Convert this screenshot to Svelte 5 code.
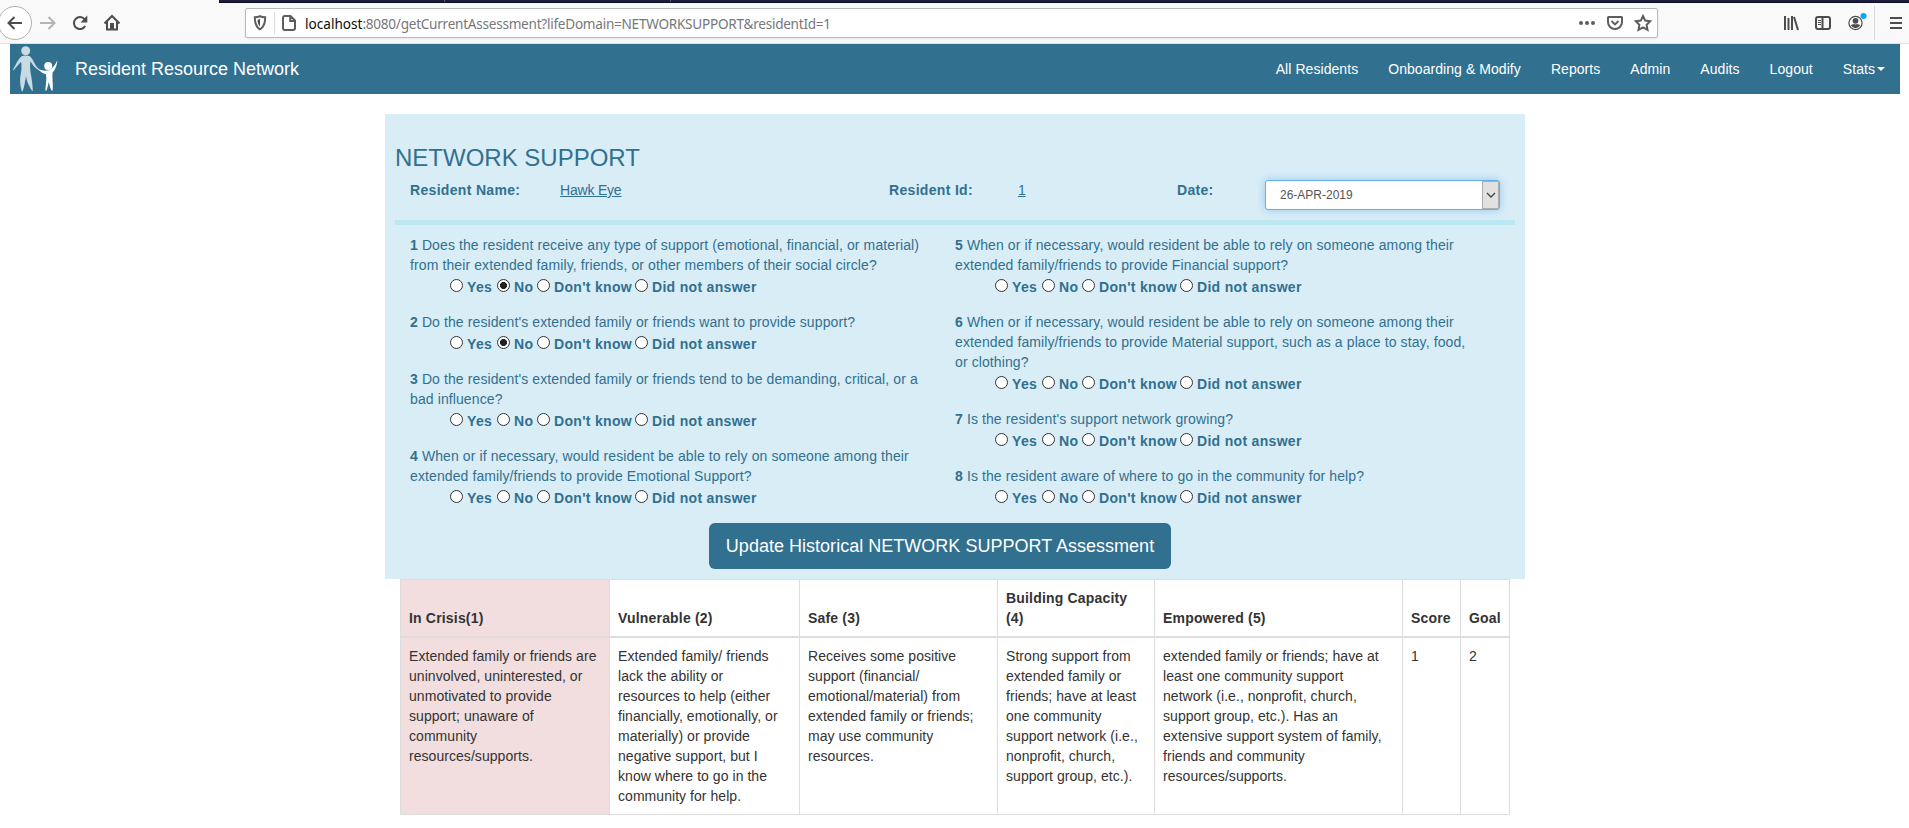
<script>
  const navItems = ['All Residents', 'Onboarding & Modify', 'Reports', 'Admin', 'Audits', 'Logout'];
  const options = ['Yes', 'No', "Don't know", 'Did not answer'];
  const columns = [
    [
      { n: 1, lines: ['Does the resident receive any type of support (emotional, financial, or material)', 'from their extended family, friends, or other members of their social circle?'], answer: 'No' },
      { n: 2, lines: ["Do the resident's extended family or friends want to provide support?"], answer: 'No' },
      { n: 3, lines: ["Do the resident's extended family or friends tend to be demanding, critical, or a", 'bad influence?'] },
      { n: 4, lines: ['When or if necessary, would resident be able to rely on someone among their', 'extended family/friends to provide Emotional Support?'] }
    ],
    [
      { n: 5, lines: ['When or if necessary, would resident be able to rely on someone among their', 'extended family/friends to provide Financial support?'] },
      { n: 6, lines: ['When or if necessary, would resident be able to rely on someone among their', 'extended family/friends to provide Material support, such as a place to stay, food,', 'or clothing?'] },
      { n: 7, lines: ["Is the resident's support network growing?"] },
      { n: 8, lines: ['Is the resident aware of where to go in the community for help?'] }
    ]
  ];
  const levels = [
    { head: ['In Crisis(1)'], width: 209, body: ['Extended family or friends are', 'uninvolved, uninterested, or', 'unmotivated to provide', 'support; unaware of', 'community', 'resources/supports.'], current: true },
    { head: ['Vulnerable (2)'], width: 190, body: ['Extended family/ friends', 'lack the ability or', 'resources to help (either', 'financially, emotionally, or', 'materially) or provide', 'negative support, but I', 'know where to go in the', 'community for help.'] },
    { head: ['Safe (3)'], width: 198, body: ['Receives some positive', 'support (financial/', 'emotional/material) from', 'extended family or friends;', 'may use community', 'resources.'] },
    { head: ['Building Capacity', '(4)'], width: 157, body: ['Strong support from', 'extended family or', 'friends; have at least', 'one community', 'support network (i.e.,', 'nonprofit, church,', 'support group, etc.).'] },
    { head: ['Empowered (5)'], width: 248, body: ['extended family or friends; have at', 'least one community support', 'network (i.e., nonprofit, church,', 'support group, etc.). Has an', 'extensive support system of family,', 'friends and community', 'resources/supports.'] },
    { head: ['Score'], width: 58, body: ['1'] },
    { head: ['Goal'], width: 49, body: ['2'] }
  ];
</script>

<div class="chrome">
  <div class="tabline"><i></i><i></i></div>
  <div class="tools">
    <div class="left-tools">
      <span class="back">
        <svg width="18" height="18" viewBox="0 0 18 18"><path d="M16 9H3M8.500 3 2.500 9l6 6" /></svg>
      </span>
      <svg class="fwd" width="18" height="18" viewBox="0 0 18 18"><path d="M1 9h14M9.500 3l6 6-6 6" /></svg>
      <svg class="reload" width="18" height="18" viewBox="0 0 18 18"><path d="M14.200 12A6 6 0 1 1 13.600 5.200" /><path class="fill" d="M16.300 1.600v6.800H9.500z" /></svg>
      <svg class="home" width="18" height="18" viewBox="0 0 18 18"><path d="M1.500 9.500 9 2l7.500 7.500M4 8v7.500h10V8" /><path class="fill" d="M7 9h4v6H7z" /></svg>
    </div>
    <div class="urlbar">
      <svg class="shield" width="14" height="16" viewBox="0 0 14 16"><path d="M7 1.200c2 .8 3.600 1 5.200 1.100 0 5.500-.8 9.700-5.200 12C2.600 12 1.800 7.800 1.800 2.300 3.400 2.200 5 2 7 1.200z" /><path class="fill" d="M7 4v7.500C5.200 10 4.700 8 4.600 4.700z" /></svg>
      <span class="sep"></span>
      <svg class="page" width="16" height="18" viewBox="0 0 16 18"><path d="M4 2h5.500L14 6.500V14a2 2 0 0 1-2 2H4a2 2 0 0 1-2-2V4a2 2 0 0 1 2-2zM9.200 2.200V7H14" /></svg>
      <span class="url"><b>localhost</b>:8080/getCurrentAssessment?lifeDomain=NETWORKSUPPORT&amp;residentId=1</span>
      <svg class="dots" width="18" height="6" viewBox="0 0 18 6"><circle cx="3" cy="3" r="2" /><circle cx="9" cy="3" r="2" /><circle cx="15" cy="3" r="2" /></svg>
      <svg class="pocket" width="18" height="16" viewBox="0 0 18 16"><path d="M2.500 2h13a.5.5 0 0 1 .5.5V7A7 7 0 0 1 2 7V2.500a.5.5 0 0 1 .5-.5z" /><path d="m5.500 6 3.500 3.400L12.500 6" /></svg>
      <svg class="star" width="18" height="18" viewBox="0 0 18 18"><path d="m9 2 2.200 4.600 5 .7-3.600 3.500.9 5L9 13.400l-4.500 2.400.9-5L1.800 7.300l5-.7z" /></svg>
    </div>
    <div class="right-tools">
      <svg class="library" width="16" height="18" viewBox="0 0 16 18"><path d="M2 2v14M5.500 4v12M9 2v14M11 3l4 13" /></svg>
      <svg class="sidebar" width="18" height="16" viewBox="0 0 18 16"><rect x="2" y="2" width="14" height="12" rx="2" /><path d="M8.500 2v12" /><path class="thin" d="M4 5.500h3M4 7.500h3M4 9.500h3" /></svg>
      <svg class="account" width="20" height="22" viewBox="0 0 20 22"><circle cx="8.500" cy="13" r="6.600" /><circle class="fill" cx="8.500" cy="10.800" r="2.900" /><path class="fill" d="M3.800 15.300c1-.9 2.200-1.100 3.300-1.300.9.600 1.900.6 2.800 0 1.100.2 2.300.4 3.300 1.300a5.300 5.300 0 0 1-9.400 0z" /><circle class="badge" cx="16.500" cy="6" r="3" /></svg>
      <span class="rule"></span>
      <svg class="menu" width="14" height="14" viewBox="0 0 14 14"><path d="M1 2h12M1 7h12M1 12h12" /></svg>
    </div>
  </div>
</div>

<nav>
  <svg class="logo" width="48" height="50" viewBox="0 0 48 50">
    <circle class="adult" cx="15.700" cy="6.700" r="4.500" />
    <path class="adult" d="M11.500 12.200c2.500-.8 6-.8 8.500 0 3.500 3.500 4.500 8.500 8 12 2.500 2 5 2.500 8 2.500l-.5 1c-4 0-7-1-9.500-3.500-2.500-2-4-4.500-5.500-7-.8 4-.5 8 .4 13 1.200 6 1.600 11 2 16.500h-1c-2.700-4.500-5.200-9-5.900-14.500-1 5.500-1.500 10-3.300 15h-1c-1.500-6-2.200-11-1-17 .8-4 1.200-8 .3-12.500C8.500 20.500 6 23.500 3.500 26.200l-.7-.5C5.500 21.500 7.500 16 11.500 12.200z" />
    <circle class="child" cx="38.200" cy="22" r="4" />
    <path class="child" d="M29 26c4 1 6.500 1 10 .3 3.500-1.500 6-5 8.300-10-.2 5-1.700 9-4.800 12.500-.5 6 .8 12 .2 17.700h-1.200c-1.300-2.500-2-5.500-2.700-8.500-.8 3-1.300 6-2.300 8.500h-1.200c.4-6 1.700-11 .7-16.200-3-.8-5-2-7-4.300z" />
  </svg>
  <span class="brand">Resident Resource Network</span>
  <ul>
    {#each navItems as item}
      <li>{item}</li>
    {/each}
    <li class="stats">Stats<i class="caret"></i></li>
  </ul>
</nav>

<main>
  <section class="card">
    <h3>NETWORK SUPPORT</h3>
    <div class="meta">
      <b>Resident Name:</b><u>Hawk Eye</u>
      <b>Resident Id:</b><u>1</u>
      <b>Date:</b>
      <div class="select"><span>26-APR-2019</span><i><svg width="10" height="8" viewBox="0 0 10 8"><path d="m1 2 4 4 4-4" /></svg></i></div>
    </div>
    <div class="divider"></div>
    <div class="questions">
      {#each columns as column}
        <div class="column">
          {#each column as q}
            <div class="question">
              <p><b>{q.n}</b> {#each q.lines as line, i}{#if i}<br />{/if}{line}{/each}</p>
              <div class="answers">
                {#each options as option}
                  <label><i class="radio" class:on={q.answer === option}></i>{option}</label>
                {/each}
              </div>
            </div>
          {/each}
        </div>
      {/each}
    </div>
    <button>Update Historical NETWORK SUPPORT Assessment</button>
  </section>

  <table>
    <colgroup>
      {#each levels as level}<col style="width: {level.width}px" />{/each}
    </colgroup>
    <thead>
      <tr>
        {#each levels as level}
          <th class:current={level.current}>{#each level.head as line, i}{#if i}<br />{/if}{line}{/each}</th>
        {/each}
      </tr>
    </thead>
    <tbody>
      <tr>
        {#each levels as level}
          <td class:current={level.current}>{#each level.body as line, i}{#if i}<br />{/if}{line}{/each}</td>
        {/each}
      </tr>
    </tbody>
  </table>
</main>

<style>
  :global(body) { background: #fff; overflow: hidden; }
  :global(#app) { font: 14px/20px "Liberation Sans", Arial, sans-serif; color: #333; }
  * { box-sizing: border-box; }
  svg { display: block; flex: none; overflow: visible; fill: none; stroke: #4c4c4f; stroke-width: 2; }
  .fill { fill: #4c4c4f; stroke: none; }

  .chrome { height: 44px; background: #f9f9fa; border-bottom: 1px solid #e0e0e1; overflow: hidden; }
  .tabline { height: 3px; margin-left: 219px; background: #1d1e3d; border-bottom: 1px solid #0c0c22; display: flex; }
  .tabline i { width: 226px; border-right: 1px solid #55566e; }
  .tools { display: flex; height: 40px; align-items: center; }
  .left-tools { display: flex; align-items: center; width: 245px; }
  .back { display: flex; align-items: center; justify-content: center; flex: none; width: 34px; height: 34px; margin-left: -2px; border: 1px solid #b1b1b3; border-radius: 50%; background: #fff; }
  .fwd { margin-left: 7px; stroke: #b4b4b6; }
  .reload { margin-left: 14px; }
  .home { margin-left: 14px; }
  .urlbar { display: flex; align-items: center; width: 1413px; height: 30px; border: 1px solid #b9b9bb; border-radius: 2px; background: #fff; box-shadow: 0 1px 3px #0001; }
  .shield { margin-left: 7px; stroke: #5d5d60; }
  .sep { width: 1px; height: 22px; margin: 0 6px 0 7px; background: #dcdcde; }
  .page { stroke: #5d5d60; }
  .url { flex: 1; margin-left: 8px; padding-top: 2px; font: 13.600px/20px "Noto Sans", "Open Sans", sans-serif; letter-spacing: -.265px; color: #77777a; white-space: nowrap; }
  .url b { font-weight: 400; letter-spacing: 0; color: #0c0c0d; }
  .dots { fill: #5d5d60; stroke: none; margin-right: 10px; }
  .pocket { stroke: #5d5d60; margin-right: 10px; }
  .star { stroke: #5d5d60; margin-right: 5px; }
  .right-tools { display: flex; flex: 1; align-items: center; }
  .library { margin-left: 125px; }
  .sidebar { margin-left: 15px; }
  .thin { stroke-width: 1; }
  .account { margin: -5px 0 0 15px; stroke-width: 1.200; }
  .badge { fill: #00a7fa; stroke: none; }
  .rule { width: 1px; height: 34px; margin: 0 14px 0 7px; background: #d7d7db; }

  nav { display: flex; align-items: center; height: 50px; margin: 0 9px 0 10px; background: #31708f; color: #fff; }
  .logo { stroke: none; }
  .adult { fill: #c8dae4; }
  .child { fill: #fff; }
  .brand { margin-left: 17px; font-size: 18px; }
  ul { display: flex; list-style: none; margin: 0 0 0 auto; padding: 0; letter-spacing: .060px; }
  li { padding: 0 15px; white-space: nowrap; }
  .stats { display: flex; align-items: center; }
  .caret { margin-left: 2px; border: 4px solid transparent; border-top-color: #fff; border-bottom: 0; }

  main { width: 1140px; margin: 20px 0 0 385px; color: #333; }
  .card { height: 465px; padding: 31px 10px 0; background: #d9edf7; color: #31708f; }
  h3 { margin: 0; font-size: 24px; line-height: 26px; font-weight: 400; }
  .meta { display: grid; grid-template-columns: 150px 329px 129px 159px 88px 235px; align-items: start; padding: 9px 15px 0; height: 49px; }
  .meta b { letter-spacing: .320px; }
  .meta u { letter-spacing: -.200px; }
  .select { display: flex; height: 30px; width: 235px; border: 1px solid #66afe9; border-radius: 3px; background: #fff; color: #555; box-shadow: 0 0 8px #66afe999; font-size: 12px; line-height: 28px; }
  .select span { flex: 1; padding-left: 14px; }
  .select i { display: flex; align-items: center; justify-content: center; width: 17px; border: 1px solid #adadad; background: #e1e1e1; }
  .select svg { stroke: #444; stroke-width: 1.300; }
  .divider { height: 5px; background: #bce8f1; }
  .questions { display: grid; grid-template-columns: 545px 545px; margin: 10px 15px 0; height: 288px; }
  .question { margin-bottom: 15px; }
  p { margin: 0; white-space: nowrap; letter-spacing: .104px; }
  .answers { display: grid; grid-template-columns: 47px 40px 98px auto; height: 22px; padding-left: 40px; align-items: start; }
  label { display: flex; height: 22px; font-weight: 700; white-space: nowrap; line-height: 24px; letter-spacing: .310px; }
  .radio { flex: none; width: 13px; height: 13px; margin: 4px 4px 0 0; border: 1px solid #333; border-radius: 50%; background: #fff; }
  .on { background: radial-gradient(circle, #222 0 3.200px, #fff 3.800px); }
  button { display: block; width: 462px; height: 46px; margin: 0 0 0 314px; padding: 0; border: 0; border-radius: 6px; background: #31708f; color: #fff; font: 18px/24px "Liberation Sans", Arial, sans-serif; letter-spacing: .020px; }

  table { width: 1109px; margin-left: 15px; table-layout: fixed; border-collapse: collapse; border: 1px solid #ddd; letter-spacing: .050px; }
  th, td { padding: 8px; border: 1px solid #ddd; text-align: left; white-space: nowrap; }
  th { vertical-align: bottom; border-bottom-width: 2px; height: 57px; padding-top: 7px; letter-spacing: .180px; }
  td { vertical-align: top; height: 177px; }
  .current { background: #f2dede; }
</style>
